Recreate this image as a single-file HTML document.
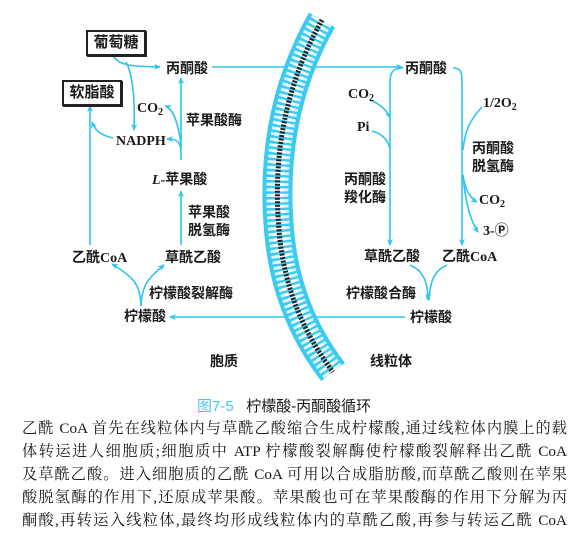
<!DOCTYPE html>
<html><head><meta charset="utf-8"><style>
body{margin:0;width:584px;height:543px;background:#fff;position:relative;overflow:hidden;font-family:"Liberation Serif","Noto Serif CJK SC",serif;color:#1a1a1a}
.t{position:absolute;font-size:14px;font-weight:bold;white-space:nowrap;line-height:16px;font-family:"Liberation Serif","Noto Sans CJK SC",sans-serif}
.box{position:absolute;border:2px solid #222;box-shadow:1px 1px 0 #222;font-size:15px;font-weight:bold;text-align:center;font-family:"Liberation Serif","Noto Sans CJK SC",sans-serif}
sub{font-size:10px;vertical-align:-3px}
.p{position:absolute;left:22px;width:545px;font-size:15.2px;line-height:23px;text-align:justify;text-align-last:justify;white-space:nowrap}
</style></head><body>
<svg width="584" height="400" style="position:absolute;left:0;top:0" fill="none">
<defs><marker id="a" markerWidth="8" markerHeight="8" refX="6" refY="4" orient="auto" markerUnits="userSpaceOnUse"><path d="M0,1 L7,4 L0,7 L2,4Z" fill="#2ec4ee"/></marker></defs>
<g stroke="#2ec4ee" stroke-width="1.6">
<line x1="212" y1="67" x2="402" y2="67" marker-end="url(#a)"/>
<path d="M113,56 C120,66 130,66 160,67" marker-end="url(#a)"/>
<path d="M126,62 C133,75 135,100 134,130" marker-end="url(#a)"/>
<line x1="181" y1="160" x2="181" y2="78" marker-end="url(#a)"/>
<line x1="181" y1="245" x2="181" y2="191" marker-end="url(#a)"/>
<path d="M181,145 C178,120 172,108 165,106" marker-end="url(#a)"/>
<path d="M181,150 C180,140 175,139 167,139" marker-end="url(#a)"/>
<path d="M113,138 C100,135 95,130 92,122" marker-end="url(#a)"/>
<line x1="90" y1="245" x2="90" y2="106" marker-end="url(#a)"/>
<path d="M141,306 C140,285 135,278 112,264" marker-end="url(#a)"/>
<path d="M141,306 C142,285 148,278 164,265" marker-end="url(#a)"/>
<line x1="282" y1="317" x2="170" y2="317" marker-end="url(#a)"/>
<path d="M403,68 C393,68 390,72 390,82 L390,245" marker-end="url(#a)"/>
<path d="M453,68 C461,68 462,72 462,82 L462,245" marker-end="url(#a)"/>
<path d="M370,100 C380,104 387,110 390,118" marker-end="url(#a)"/>
<path d="M372,131 C380,133 387,138 390,148"/>
<path d="M482,107 C470,120 465,130 463,150"/>
<path d="M463,175 C465,190 470,198 477,202" marker-end="url(#a)"/>
<path d="M463,175 C465,200 470,220 478,232" marker-end="url(#a)"/>
<path d="M410,265 C422,270 428,280 428,300" marker-end="url(#a)"/>
<path d="M447,265 C435,270 430,280 429,300"/>
<line x1="405" y1="317" x2="282" y2="317"/>
</g>
<g>
<path id="m" d="M322,20 C288,80 272,150 279,230 C284,290 305,335 333,372" stroke="#3ccaf0" stroke-width="30"/>
<path d="M322,20 C288,80 272,150 279,230 C284,290 305,335 333,372" stroke="#d4f5ff" stroke-width="22" stroke-dasharray="3 2.5"/>
<path d="M322,20 C288,80 272,150 279,230 C284,290 305,335 333,372" stroke="#fff" stroke-width="14" stroke-dasharray="3 2.5" opacity=".8"/>
<path d="M322,20 C288,80 272,150 279,230 C284,290 305,335 333,372" stroke="#222" stroke-width="5" stroke-dasharray="2 1.5"/>
</g>
</svg>
<div class="box" style="left:86px;top:30px;width:56px;height:22px;line-height:22px">葡萄糖</div>
<div class="box" style="left:62px;top:80px;width:56px;height:22px;line-height:22px">软脂酸</div>
<div class="t" style="left:166px;top:62px">丙酮酸</div>
<div class="t" style="left:137px;top:101px">CO<sub>2</sub></div>
<div class="t" style="left:116px;top:134px">NADPH</div>
<div class="t" style="left:186px;top:114px">苹果酸酶</div>
<div class="t" style="left:152px;top:173px"><i>L</i>-苹果酸</div>
<div class="t" style="left:188px;top:205px;line-height:18px">苹果酸<br>脱氢酶</div>
<div class="t" style="left:72px;top:251px">乙酰CoA</div>
<div class="t" style="left:165px;top:251px">草酰乙酸</div>
<div class="t" style="left:149px;top:287px">柠檬酸裂解酶</div>
<div class="t" style="left:124px;top:310px">柠檬酸</div>
<div class="t" style="left:210px;top:355px">胞质</div>
<div class="t" style="left:405px;top:62px">丙酮酸</div>
<div class="t" style="left:348px;top:87px">CO<sub>2</sub></div>
<div class="t" style="left:357px;top:120px">Pi</div>
<div class="t" style="left:344px;top:172px;line-height:18px">丙酮酸<br>羧化酶</div>
<div class="t" style="left:483px;top:96px">1/2O<sub>2</sub></div>
<div class="t" style="left:472px;top:141px;line-height:18px">丙酮酸<br>脱氢酶</div>
<div class="t" style="left:479px;top:193px">CO<sub>2</sub></div>
<div class="t" style="left:483px;top:224px">3-Ⓟ</div>
<div class="t" style="left:364px;top:250px">草酰乙酸</div>
<div class="t" style="left:442px;top:250px">乙酰CoA</div>
<div class="t" style="left:346px;top:287px">柠檬酸合酶</div>
<div class="t" style="left:410px;top:311px">柠檬酸</div>
<div class="t" style="left:370px;top:355px">线粒体</div>
<div style="position:absolute;left:197px;top:395px;font-size:15px;font-family:'Liberation Sans','Noto Sans CJK SC',sans-serif;white-space:nowrap"><span style="color:#4cc6ef">图7-5</span>&nbsp;&nbsp;&nbsp;柠檬酸-丙酮酸循环</div>
<div class="p" style="top:417px">乙酰 CoA 首先在线粒体内与草酰乙酸缩合生成柠檬酸,通过线粒体内膜上的载</div>
<div class="p" style="top:440px">体转运进人细胞质;细胞质中 ATP 柠檬酸裂解酶使柠檬酸裂解释出乙酰 CoA</div>
<div class="p" style="top:463px">及草酰乙酸。进入细胞质的乙酰 CoA 可用以合成脂肪酸,而草酰乙酸则在苹果</div>
<div class="p" style="top:486px">酸脱氢酶的作用下,还原成苹果酸。苹果酸也可在苹果酸酶的作用下分解为丙</div>
<div class="p" style="top:509px">酮酸,再转运入线粒体,最终均形成线粒体内的草酰乙酸,再参与转运乙酰 CoA</div>
</body></html>
